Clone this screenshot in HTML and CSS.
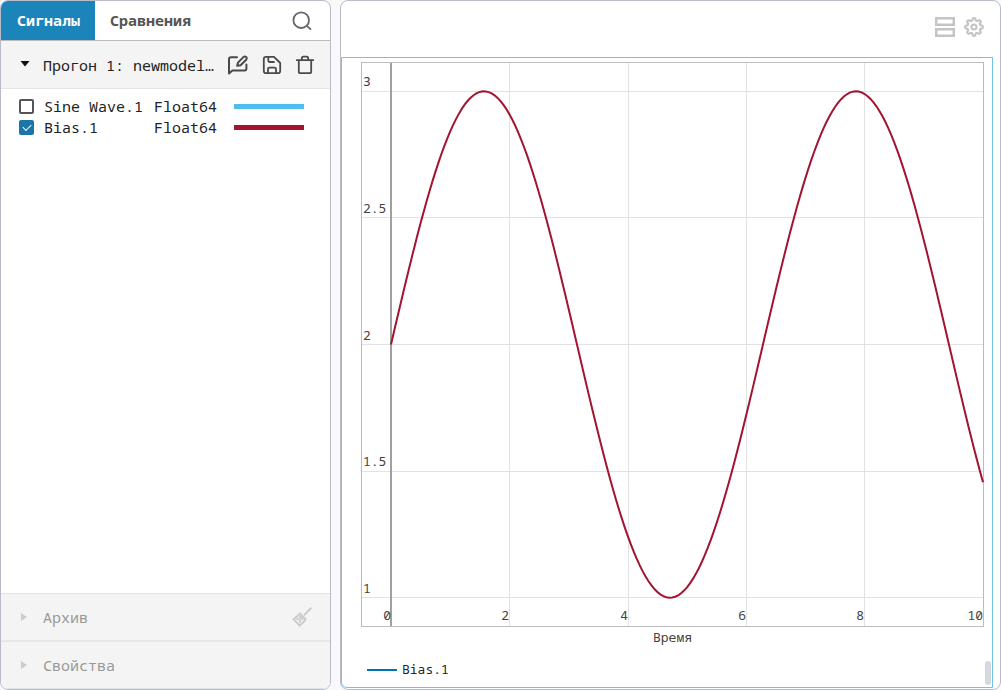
FILE: index.html
```html
<!DOCTYPE html>
<html lang="ru">
<head>
<meta charset="utf-8">
<title>Сигналы</title>
<link rel="stylesheet" href="styles.css">
</head>
<body>
<aside class="panel sidebar">
  <nav class="tabs">
    <button class="tab tab-active" type="button">Сигналы</button>
    <button class="tab" type="button">Сравнения</button>
    <button class="icon-btn search" type="button" aria-label="Поиск">
      <svg width="20" height="20" viewBox="0 0 20 20" fill="none" stroke="#666" stroke-width="1.8"><circle cx="9.2" cy="9.2" r="7.8"/><path d="M14.8 14.8L19 18.6"/></svg>
    </button>
  </nav>
  <section class="run">
    <button class="toggle" type="button"><svg class="arrow" width="10" height="8" viewBox="0 0 10 8"><path d="M0.500 0h9L5 5.500z" fill="#111"/></svg><span class="run-name">Прогон 1: newmodel…</span></button>
    <button class="icon-btn" type="button" aria-label="Редактировать">
      <svg width="22" height="22" viewBox="0 0 22 22" fill="none" stroke="#4a4a4a" stroke-width="2" stroke-linejoin="round" stroke-linecap="round"><path d="M10 3.200H4Q2 3.200 2 5.200V19.600L5.400 16.400H17.600Q19.400 16.400 19.400 14.400V10.500"/><path d="M10.200 11.800L11 8.600L16.600 2.900Q17.800 1.900 19.200 3Q20.400 4.200 19.400 5.500L13.600 11.200z"/></svg>
    </button>
    <button class="icon-btn" type="button" aria-label="Сохранить">
      <svg width="20" height="20" viewBox="0 0 20 20" fill="none" stroke="#4a4a4a" stroke-width="1.8" stroke-linejoin="round" stroke-linecap="round"><path d="M4 1.800H12L18.200 8V16Q18.200 18.200 16 18.200H4Q1.800 18.200 1.800 16V4Q1.800 1.800 4 1.800z"/><path d="M6.300 2V5.500Q6.300 7 7.800 7H12M6 18V14Q6 12.600 7.400 12.600H12.600Q14 12.600 14 14V18"/></svg>
    </button>
    <button class="icon-btn" type="button" aria-label="Удалить">
      <svg width="20" height="20" viewBox="0 0 20 20" fill="none" stroke="#4a4a4a" stroke-width="1.8" stroke-linejoin="round" stroke-linecap="round"><path d="M1.800 5.200H18.200M3.800 5.400V16.400Q3.800 18.200 5.600 18.200H14.400Q16.200 18.200 16.200 16.400V5.400M6.800 5V3.300Q6.800 1.700 8.400 1.700H11.600Q13.200 1.700 13.200 3.300V5"/></svg>
    </button>
  </section>
  <table class="signals">
    <tr>
      <td class="col-check"><input type="checkbox" id="s1"></td>
      <td class="col-name"><label for="s1">Sine Wave.1</label></td>
      <td class="col-type">Float64</td>
      <td><span class="swatch swatch-blue"></span></td>
    </tr>
    <tr>
      <td class="col-check"><input type="checkbox" id="s2" checked></td>
      <td class="col-name"><label for="s2">Bias.1</label></td>
      <td class="col-type">Float64</td>
      <td><span class="swatch swatch-red"></span></td>
    </tr>
  </table>
  <footer class="folds">
    <div class="fold">
      <button class="toggle" type="button"><svg class="arrow" width="10" height="8" viewBox="0 0 10 8"><path d="M1 0L7 4L1 8z" fill="#ccc"/></svg><span>Архив</span></button>
      <button class="icon-btn" type="button" aria-label="Очистить">
        <svg width="20" height="20" viewBox="0 0 20 20" fill="none" stroke="#ccc" stroke-width="2"><path d="M19.400 0.800L12 8.200"/><path d="M8 6.600L13.600 12.200L12.400 14L7.800 18.600L1.600 12.200L6 8.400zM4.200 12.400L7.800 11.400M7.600 15.600L8.600 12.400M7.400 9L11 12.600"/></svg>
      </button>
    </div>
    <div class="fold">
      <button class="toggle" type="button"><svg class="arrow" width="10" height="8" viewBox="0 0 10 8"><path d="M1 0L7 4L1 8z" fill="#ccc"/></svg><span>Свойства</span></button>
    </div>
  </footer>
</aside>
<main class="panel viewer">
  <header class="toolbar">
    <button class="icon-btn" type="button" aria-label="Макет">
      <svg width="20" height="20" viewBox="0 0 20 20" fill="none" stroke="#c4c4c4" stroke-width="2.4"><path d="M1.200 1.200H18.800V7.800H1.200zM1.200 12.200H18.800V18.800H1.200z"/></svg>
    </button>
    <button class="icon-btn" type="button" aria-label="Настройки">
      <svg id="gear" width="20" height="20" viewBox="-10 -10 20 20" fill="none" stroke="#c4c4c4" stroke-width="2.1" stroke-linejoin="round"><path/><circle r="2.5"/></svg>
    </button>
  </header>
  <figure class="chart">
    <svg class="plot" viewBox="0 0 623 565">
      <g class="grid"><path d="M0 29.500H623M0 155.500H623M0 282.500H623M0 409.500H623M0 535.500H623M148.500 0V565M267.500 0V565M385.500 0V565M503.500 0V565"/></g>
      <path class="axis" d="M30 0V565"/>
      <rect class="frame" x="0.5" y="0.5" width="622" height="564"/>
      <polyline id="wave" class="wave"/>
      <g class="ticks"><text x="2" y="24">3</text><text x="2" y="151">2.5</text><text x="2" y="278">2</text><text x="2" y="404">1.5</text><text x="2" y="531">1</text></g>
      <g class="ticks ticks-x"><text x="30" y="558">0</text><text x="148" y="558">2</text><text x="267" y="558">4</text><text x="385" y="558">6</text><text x="503" y="558">8</text><text x="622" y="558">10</text></g>
    </svg>
    <div class="axis-title">Время</div>
    <figcaption class="legend"><span class="legend-line"></span>Bias.1</figcaption>
    <span class="thumb"></span>
  </figure>
</main>
<script src="chart.js"></script>
</body>
</html>
```
FILE: styles.css
```css
* { box-sizing: border-box; }
body {
  margin: 0;
  min-height: 100vh;
  display: flex;
  gap: 9px;
  background: #f9f9fb;
  color: #222;
  font: 15px/21px "Noto Sans Mono", "DejaVu Sans Mono", monospace;
}
button {
  margin: 0;
  padding: 0;
  border: 0;
  background: none;
  font: inherit;
  color: inherit;
}
svg { display: block; }
.panel {
  background: #fff;
  border: 1px solid #b9bbca;
  border-radius: 8px;
}
.sidebar {
  flex: 0 0 331px;
  display: flex;
  flex-direction: column;
  overflow: hidden;
}
.tabs {
  display: flex;
  height: 40px;
  border-bottom: 1px solid #bbb;
}
.tab {
  padding: 0 15px;
  font-weight: 700;
  color: #555;
}
.tab-active { padding-left: 16px; background: #1b84b9; color: #fff; }
.icon-btn { flex: none; }
.search { margin: 0 18px 0 auto; }
.run {
  display: flex;
  align-items: center;
  gap: 13px;
  height: 48px;
  padding: 1px 15px 0 19px;
  background: #f4f4f4;
  border-bottom: 1px solid #e4e4e4;
}
.toggle {
  flex: 1;
  min-width: 0;
  display: flex;
  align-items: center;
  gap: 13px;
  text-align: left;
}
.arrow { flex: none; }
.run-name { white-space: nowrap; }
.signals {
  margin: 7px 0 0 18px;
  border-collapse: collapse;
  align-self: flex-start;
}
.signals td { padding: 0; height: 21px; }
.signals .col-check { width: 25px; }
.signals .col-name { width: 110px; }
.signals .col-type { width: 80px; }
.signals input {
  appearance: none;
  display: block;
  width: 15px;
  height: 15px;
  margin: 0;
  border: 2px solid #555;
  border-radius: 2px;
}
.signals input:checked {
  position: relative;
  border-color: #1b75a6;
  background: #1b75a6;
}
.signals input:checked::after {
  content: "";
  position: absolute;
  left: 2px;
  top: 2px;
  width: 7px;
  height: 4px;
  border: solid #fff;
  border-width: 0 0 1px 1px;
  transform: rotate(-45deg);
}
.swatch { display: block; width: 70px; height: 5px; }
.swatch-blue { background: #4dbeee; }
.swatch-red { background: #a2142f; }
.folds {
  margin-top: auto;
  color: #999;
  background: #f4f4f4;
  border: solid #e4e4e4;
  border-width: 1px 0;
}
.fold {
  display: flex;
  align-items: center;
  height: 46px;
  padding: 0 18px 0 19px;
}
.fold + .fold { height: 48px; border-top: 2px solid #e7e7e7; }
.viewer { flex: 1; min-width: 0; }
.toolbar {
  display: flex;
  justify-content: flex-end;
  gap: 9px;
  height: 56px;
  padding: 16px 16px 20px 0;
}
.chart {
  position: relative;
  height: 631px;
  margin: 0 7px 0 0;
  padding: 4px 8px 0 19px;
  border: 1px solid #6fc3ea;
  border-radius: 0 0 0 6px;
}
.plot { width: 100%; height: auto; }
.grid { fill: none; stroke: #e2e2e2; }
.axis { stroke: #a0a0a0; stroke-width: 2; }
.frame { fill: none; stroke: #bcbcbc; }
.wave { fill: none; stroke: #a2142f; stroke-width: 2; }
.ticks { fill: #444; font-size: 13px; }
.ticks-x { text-anchor: end; }
.axis-title { font-size: 13px; text-align: center; color: #444; }
.legend {
  display: flex;
  align-items: center;
  gap: 5px;
  margin: 11px 0 0 6px;
  font-size: 13px;
}
.legend-line { width: 30px; height: 2px; background: #0072bd; }
.thumb {
  position: absolute;
  right: 1px;
  bottom: 2px;
  width: 6px;
  height: 24px;
  border-radius: 3px;
  background: #d6d8e0;
}
```
FILE: chart.js
```js
// y = 2 + sin(t), t in [0, 10]
const points = [];
for (let i = 0; i <= 200; i++) {
  const t = i / 20;
  points.push(`${30 + t * 59.2},${282.5 - Math.sin(t) * 253.2}`);
}
document.getElementById("wave").setAttribute("points", points.join(" "));

// Eight rounded teeth around the gear
const teeth = [];
for (let a = 0; a <= 360; a += 5) {
  const r = 7.7 + 1.2 * Math.tanh(2.2 * Math.cos((a * 8 * Math.PI) / 180));
  const k = (a * Math.PI) / 180;
  teeth.push(`${(r * Math.cos(k)).toFixed(2)} ${(r * Math.sin(k)).toFixed(2)}`);
}
document.querySelector("#gear path").setAttribute("d", `M${teeth.join("L")}Z`);
```
